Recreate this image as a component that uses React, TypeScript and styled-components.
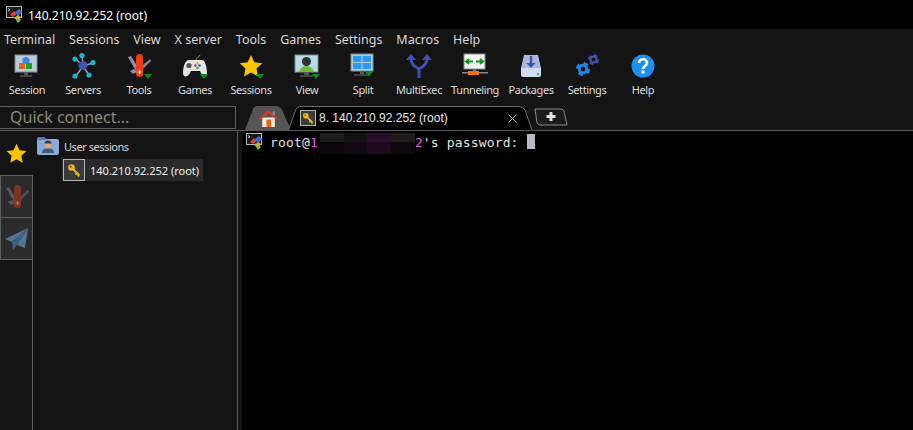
import React from "react";
import styled, { createGlobalStyle } from "styled-components";

const GlobalStyle = createGlobalStyle`
  html, body {
    margin: 0;
    padding: 0;
    background: #141414;
    overflow: hidden;
  }
`;

const Window = styled.div`
  width: 913px;
  height: 430px;
  display: flex;
  flex-direction: column;
  background: #141414;
  color: #e0e0e0;
  font-family: "Noto Sans", "Open Sans", sans-serif;
  overflow: hidden;
`;

const TitleBar = styled.div`
  height: 29px;
  flex: none;
  display: flex;
  align-items: center;
  gap: 4px;
  padding: 1px 0 0 6px;
  box-sizing: border-box;
  background: #000;
  color: #fff;
  font-size: 12px;
`;

const MenuBar = styled.div`
  height: 21px;
  flex: none;
  display: flex;
  align-items: center;
  gap: 13.9px;
  padding-left: 4px;
  font-size: 12.5px;
  color: #d8d8d8;
`;

const Toolbar = styled.div`
  height: 56px;
  flex: none;
  display: flex;
`;

const ToolButton = styled.div`
  width: 56px;
  flex: none;
  display: flex;
  flex-direction: column;
  align-items: center;
  gap: 3px;
  padding-top: 3px;
  font-size: 11px;
  letter-spacing: -0.4px;
  color: #dcdcdc;
  white-space: nowrap;
  svg {
    flex: none;
  }
  &:first-child {
    margin-left: -1px;
  }
`;

const ConnectRow = styled.div`
  height: 24px;
  flex: none;
  display: flex;
`;

const QuickConnect = styled.div`
  width: 236px;
  height: 23px;
  box-sizing: border-box;
  flex: none;
  border: 1px solid #5f5f5f;
  border-left: none;
  padding-left: 10px;
  font-size: 16px;
  line-height: 20px;
  color: #8a8a80;
`;

const TabStrip = styled.div`
  flex: 1;
  display: flex;
  align-items: flex-end;
  padding-left: 9px;
`;

const TabShape = styled.svg`
  position: absolute;
  inset: 0;
`;

const TabLayer = styled.span`
  position: relative;
  display: flex;
  align-items: center;
`;

const HomeTab = styled.div`
  position: relative;
  width: 46px;
  height: 24px;
  flex: none;
  display: flex;
  align-items: center;
  justify-content: center;
`;

const ActiveTab = styled.div`
  position: relative;
  width: 244px;
  height: 24px;
  flex: none;
  display: flex;
  align-items: center;
  gap: 3px;
  padding-left: 12px;
  box-sizing: border-box;
  margin-left: -3px;
  color: #e8e8e8;
  font-family: "Liberation Sans", Arial, sans-serif;
  font-size: 12px;
  white-space: nowrap;
`;

const TabClose = styled.svg`
  position: relative;
  margin-left: auto;
  margin-right: 15px;
`;

const AddTab = styled.div`
  position: relative;
  width: 34px;
  height: 18px;
  flex: none;
  margin: 0 0 4px 2px;
`;

const Main = styled.div`
  flex: 1;
  display: flex;
  min-height: 0;
  border-top: 1px solid #5a5a5a;
`;

const Sidebar = styled.div`
  width: 237px;
  flex: none;
  display: flex;
  border-right: 1px solid #5f5f5f;
`;

const SideRail = styled.div`
  width: 33px;
  flex: none;
  display: flex;
  flex-direction: column;
`;

const RailStar = styled.div`
  height: 44px;
  flex: none;
  display: flex;
  align-items: center;
  justify-content: center;
`;

const RailStack = styled.div`
  flex: 1;
  display: flex;
  flex-direction: column;
  border-right: 1px solid #5f5f5f;
`;

const RailTab = styled.div`
  height: 41px;
  flex: none;
  display: flex;
  align-items: center;
  justify-content: center;
  background: #2c2c2c;
  border-top: 1px solid #5f5f5f;
  border-left: 1px solid #5f5f5f;
  &:last-child {
    border-bottom: 1px solid #5f5f5f;
  }
`;

const Tree = styled.div`
  flex: 1;
  padding: 5px 0 0 4px;
  display: flex;
  flex-direction: column;
  gap: 3px;
`;

const TreeFolder = styled.div`
  display: flex;
  align-items: center;
  gap: 5px;
  height: 20px;
  font-size: 11px;
  letter-spacing: -0.45px;
  color: #d8d8d8;
`;

const TreeSession = styled.div`
  width: 141px;
  height: 22px;
  margin-left: 25px;
  display: flex;
  align-items: center;
  gap: 5px;
  padding-left: 1px;
  box-sizing: border-box;
  background: #2a2a2a;
  font-size: 11px;
  color: #f0f0f0;
  white-space: nowrap;
`;

const KeyBox = styled.span<{ $size: number }>`
  position: relative;
  width: ${(p) => p.$size}px;
  height: ${(p) => p.$size}px;
  flex: none;
  display: flex;
  align-items: center;
  justify-content: center;
  box-sizing: border-box;
  border: 1px solid #b5b5b5;
  background: #3a3a3a;
`;

const Terminal = styled.div`
  flex: 1;
  margin-left: 4px;
  background: #000;
  padding: 1px 0 0 4px;
  display: flex;
  align-items: flex-start;
  gap: 6px;
  font-family: "DejaVu Sans Mono", "Liberation Mono", monospace;
  font-size: 13px;
  line-height: 21px;
  color: #e4e4e4;
  letter-spacing: 0.15px;
  white-space: pre;
`;

const PromptLine = styled.div`
  display: flex;
  align-items: flex-start;
`;

const Pink = styled.span`
  color: #e858e8;
`;

const Redacted = styled.span`
  width: 95px;
  height: 21px;
  margin: 1px 0 0 2px;
  display: grid;
  grid-template-columns: repeat(4, 1fr);
  grid-template-rows: 9px 12px;
`;

const RedactCell = styled.span<{ $color: string }>`
  background: ${(p) => p.$color};
`;

const Cursor = styled.span`
  width: 8px;
  height: 15px;
  margin-top: 2px;
  background: #b8b8c4;
`;

const TermIconWrap = styled.span`
  margin-top: 1px;
  display: flex;
`;

const AppIcon = ({ size = 18 }: { size?: number }) => (
  <svg width={size} height={size} viewBox="0 0 18 18">
    <rect x="0.500" y="0.500" width="15" height="11" fill="#1a1a1a" stroke="#b8b8b8" />
    <path d="M2 2.500l2 1.200-2 1.200" stroke="#ddd" fill="none" strokeWidth="0.800" />
    <path d="M4 9l4-4 3 3-4 3z" fill="#e03a3a" />
    <path d="M9 6l4-3 3 3-4 4z" fill="#3a6fd8" />
    <path d="M8 12l4-3 3 2-3 4z" fill="#d8a83a" />
    <path d="M10 14l3-2 2 2-3 3z" fill="#6fc83a" />
  </svg>
);

const Badge = () => <path d="M18 21h8l-4 5z" fill="#0e8a1e" />;

const SessionIcon = () => (
  <svg width="26" height="26" viewBox="0 0 26 26">
    <rect x="1" y="2" width="22" height="17" fill="#b4cbd8" stroke="#7c8f9a" />
    <rect x="10" y="19" width="4" height="3" fill="#555" />
    <rect x="6" y="22" width="12" height="2" fill="#444" />
    <circle cx="12" cy="7.500" r="3.600" fill="#3f7fe0" />
    <rect x="5" y="10" width="6" height="6" fill="#e0602a" />
    <rect x="12" y="10" width="6" height="6" fill="#1ea32a" />
  </svg>
);

const ServersIcon = () => (
  <svg width="26" height="26" viewBox="0 0 26 26">
    <g stroke="#9aa6b0" strokeWidth="1.400">
      <path d="M13 13L6 6M13 13L12 2M13 13L23 10M13 13L6 23M13 13L19 22" />
    </g>
    <circle cx="13" cy="12.500" r="4.500" fill="#3e52b4" />
    <g fill="#19b5cf">
      <circle cx="5" cy="6" r="2.600" />
      <circle cx="12" cy="2.600" r="2.600" />
      <circle cx="23" cy="9.500" r="2.600" />
      <circle cx="5" cy="23" r="2.600" />
      <circle cx="19" cy="22" r="2.600" />
    </g>
  </svg>
);

const ToolsIcon = ({ dim }: { dim?: boolean }) => (
  <svg width="26" height="26" viewBox="0 0 26 26" opacity={dim ? 0.42 : 1}>
    <path d="M2 4l3-1 8 13-3 2z" fill="#8f8fb0" />
    <path d="M24 6l1 2-11 11-2-3z" fill="#7d7d98" />
    <path d="M4 18l4-2 3 3-4 2z" fill="#8f8fb0" />
    <rect x="10" y="1" width="7" height="23" rx="3.500" fill="#f23c10" />
    <path d="M13.500 17v4M11.500 19h4" stroke="#fff" strokeWidth="1.200" />
    {!dim && <Badge />}
  </svg>
);

const GamesIcon = () => (
  <svg width="26" height="26" viewBox="0 0 26 26">
    <path d="M14 7c0-3 3-2 4-5" stroke="#888" fill="none" />
    <path d="M7 7h13c3 0 5 7 5 13 0 5-4 4-6 0l-1-2H9l-1 2c-2 4-7 5-7 0C1 14 3 7 7 7z" fill="#e4e4e4" />
    <circle cx="7" cy="12.500" r="2.600" fill="#555" />
    <circle cx="15.500" cy="10" r="1.200" fill="#f2b01e" />
    <circle cx="13.500" cy="12.500" r="1.300" fill="#e02a2a" />
    <circle cx="17.500" cy="12.500" r="1.300" fill="#2a5fe0" />
    <circle cx="15.500" cy="15" r="1.200" fill="#1ea32a" />
    <Badge />
  </svg>
);

const StarIcon = ({ size = 26, badge }: { size?: number; badge?: boolean }) => (
  <svg width={size} height={size} viewBox="0 0 26 26">
    <path d="M13 2l3.400 7.200 7.900 1-5.800 5.400 1.500 7.800-7-3.800-7 3.800 1.500-7.800L1.700 10.200l7.900-1z" fill="#f6c400" />
    {badge && <Badge />}
  </svg>
);

const ViewIcon = () => (
  <svg width="26" height="26" viewBox="0 0 26 26">
    <rect x="1" y="2" width="23" height="17" fill="#b4dbe8" stroke="#7c8f9a" />
    <rect x="10" y="19" width="5" height="3" fill="#555" />
    <rect x="6" y="22" width="13" height="2" fill="#444" />
    <circle cx="12.500" cy="8.500" r="4.500" fill="#2e2e2e" />
    <path d="M5 19c1-5 5-6 7.500-6s6 1 7.500 6z" fill="#76b83a" />
    <Badge />
  </svg>
);

const SplitIcon = () => (
  <svg width="26" height="26" viewBox="0 0 26 26">
    <rect x="1" y="1" width="22" height="17" fill="#b4cbd8" stroke="#7c8f9a" />
    <rect x="3" y="3" width="8.500" height="6" fill="#2a9bf0" />
    <rect x="12.500" y="3" width="8.500" height="6" fill="#2a9bf0" />
    <rect x="3" y="10" width="8.500" height="6" fill="#2a9bf0" />
    <rect x="12.500" y="10" width="8.500" height="6" fill="#2a9bf0" />
    <rect x="10" y="18" width="4" height="3" fill="#555" />
    <rect x="4" y="21" width="16" height="2" fill="#444" />
    <path d="M15 19h8l-4 4z" fill="#0e8a1e" />
  </svg>
);

const MultiExecIcon = () => (
  <svg width="26" height="26" viewBox="0 0 26 26">
    <path d="M13 25V17M13 17C13 14 5 14 5 6M13 17C13 14 21 14 21 6" stroke="#3d50ad" strokeWidth="3" fill="none" />
    <path d="M5 1l5 6H0zM21 1l5 6H16z" fill="#3d50ad" />
  </svg>
);

const TunnelingIcon = () => (
  <svg width="28" height="26" viewBox="0 0 28 26">
    <rect x="3" y="1" width="21" height="15" fill="#f4f4f4" stroke="#8a8a8a" />
    <path d="M12 8.500H5M8 6L5 8.500 8 11M15 8.500h7M19 6l3 2.500-3 2.500" stroke="#0e9a1e" strokeWidth="2" fill="none" />
    <rect x="12" y="16" width="3" height="3" fill="#777" />
    <rect x="1" y="19" width="26" height="1.500" fill="#888" />
    <rect x="7" y="18" width="11" height="4" fill="#f0701e" />
  </svg>
);

const PackagesIcon = () => (
  <svg width="26" height="26" viewBox="0 0 26 26">
    <path d="M6 2h14l3 13H3z" fill="#a9b6e0" />
    <path d="M3 15h20v7c0 1-1 2-2 2H5c-1 0-2-1-2-2z" fill="#d0dcf2" />
    <path d="M13 3v10" stroke="#3d50ad" strokeWidth="2.200" />
    <path d="M8.500 10l4.500 5 4.500-5z" fill="#3d50ad" />
    <rect x="19" y="20" width="2" height="2" fill="#2ebd3a" />
  </svg>
);

const Gear = ({ cx, cy, r, color }: { cx: number; cy: number; r: number; color: string }) => (
  <g>
    <circle cx={cx} cy={cy} r={r * 0.74} fill={color} />
    <circle
      cx={cx}
      cy={cy}
      r={r * 0.84}
      fill="none"
      stroke={color}
      strokeWidth={r * 0.34}
      strokeDasharray={`${r * 0.66} ${r * 0.66}`}
    />
    <circle cx={cx} cy={cy} r={r * 0.34} fill="#141414" />
  </g>
);

const SettingsIcon = () => (
  <svg width="26" height="26" viewBox="0 0 26 26">
    <Gear cx={9} cy={16} r={7} color="#1e88e8" />
    <Gear cx={19.500} cy={6.500} r={5.500} color="#3d50ad" />
  </svg>
);

const HelpIcon = () => (
  <svg width="26" height="26" viewBox="0 0 26 26">
    <circle cx="13" cy="13" r="11.500" fill="#1e90f0" />
    <path d="M9 10c0-5 8-5 8 0 0 3-4 3-4 6" stroke="#fff" strokeWidth="2.600" fill="none" />
    <rect x="11.500" y="17.500" width="3" height="3" fill="#fff" />
  </svg>
);

const KeyIcon = ({ size = 14 }: { size?: number }) => (
  <svg width={size} height={size} viewBox="0 0 14 14">
    <circle cx="4.500" cy="4.500" r="3.300" fill="#f0b61e" />
    <circle cx="3.700" cy="3.700" r="0.900" fill="#3a3a3a" />
    <path d="M6 6l6.500 6.500M10 10l-1.500 1.500M12 12l-1.200 1.200" stroke="#f0b61e" strokeWidth="2" />
  </svg>
);

const HomeIcon = () => (
  <svg width="19" height="18" viewBox="0 0 18 17">
    <path d="M3 8h12v9H3z" fill="#f2ece0" />
    <path d="M9 1L0.500 9l1.300 1L9 4l7.200 6 1.300-1z" fill="#d83a2a" />
    <rect x="13" y="2" width="2" height="4" fill="#7c8fb0" />
    <rect x="7" y="10" width="4.500" height="7" fill="#e8601e" />
  </svg>
);

const FolderIcon = () => (
  <svg width="22" height="18" viewBox="0 0 22 18">
    <path d="M0 2c0-1 1-2 2-2h5l2 2h11c1 0 2 1 2 2v12c0 1-1 2-2 2H2c-1 0-2-1-2-2z" fill="#8aaad8" />
    <path d="M0 1.500C0 .5 1 0 2 0h5l2 3H0z" fill="#4a7ac8" />
    <circle cx="11" cy="7.500" r="3.300" fill="#e8a878" />
    <path d="M7.500 6.500c0-4 7-4 7 0z" fill="#3a3a3a" />
    <path d="M5 16c0-4 3-4.500 6-4.500s6 .5 6 4.500z" fill="#4a5a6a" />
  </svg>
);

const PlaneIcon = () => (
  <svg width="24" height="24" viewBox="0 0 24 24" opacity={0.62}>
    <path d="M23 1L0 12l7 3z" fill="#6fa0d8" />
    <path d="M23 1L7 15l1 8 4-5z" fill="#4a80c0" />
    <path d="M23 1L12 18l8 3z" fill="#6fa0d8" />
  </svg>
);

const tools = [
  { label: "Session", icon: <SessionIcon /> },
  { label: "Servers", icon: <ServersIcon /> },
  { label: "Tools", icon: <ToolsIcon /> },
  { label: "Games", icon: <GamesIcon /> },
  { label: "Sessions", icon: <StarIcon badge /> },
  { label: "View", icon: <ViewIcon /> },
  { label: "Split", icon: <SplitIcon /> },
  { label: "MultiExec", icon: <MultiExecIcon /> },
  { label: "Tunneling", icon: <TunnelingIcon /> },
  { label: "Packages", icon: <PackagesIcon /> },
  { label: "Settings", icon: <SettingsIcon /> },
  { label: "Help", icon: <HelpIcon /> },
];

const menus = ["Terminal", "Sessions", "View", "X server", "Tools", "Games", "Settings", "Macros", "Help"];

const blur = ["#1c1c1c", "#121212", "#2a0f2a", "#1f1b19", "#0a050a", "#150815", "#1e0a1e", "#100810"];

export default function App() {
  return (
    <Window>
      <GlobalStyle />
      <TitleBar>
        <AppIcon />
        140.210.92.252 (root)
      </TitleBar>
      <MenuBar>
        {menus.map((m) => (
          <span key={m}>{m}</span>
        ))}
      </MenuBar>
      <Toolbar>
        {tools.map((t) => (
          <ToolButton key={t.label}>
            {t.icon}
            {t.label}
          </ToolButton>
        ))}
      </Toolbar>
      <ConnectRow>
        <QuickConnect>Quick connect...</QuickConnect>
        <TabStrip>
          <HomeTab>
            <TabShape width="46" height="24" viewBox="0 0 46 24">
              <path d="M0 24L8 3Q9 0 13 0H30Q35 0 37 4L46 24z" fill="#555" />
            </TabShape>
            <TabLayer>
              <HomeIcon />
            </TabLayer>
          </HomeTab>
          <ActiveTab>
            <TabShape width="244" height="24" viewBox="0 0 244 24">
              <path d="M0.500 24L8 3Q9 .5 13 .5H231Q235 .5 237 4L244 24" fill="#000" stroke="#6a6a6a" />
            </TabShape>
            <KeyBox $size={16}>
              <KeyIcon size={12} />
            </KeyBox>
            <TabLayer>8. 140.210.92.252 (root)</TabLayer>
            <TabClose width="9" height="9" viewBox="0 0 9 9">
              <path d="M0.500 0.500l8 8M8.500 0.500l-8 8" stroke="#bdbdbd" strokeWidth="1" />
            </TabClose>
          </ActiveTab>
          <AddTab>
            <TabShape width="34" height="18" viewBox="0 0 34 18">
              <path d="M1 1h26q2 0 3 2l3 14H6q-2 0-3-2z" fill="#1c1c1c" stroke="#8a8a8a" />
              <path d="M17 4v9M12.500 8.500h9" stroke="#e0e0e0" strokeWidth="3" />
            </TabShape>
          </AddTab>
        </TabStrip>
      </ConnectRow>
      <Main>
        <Sidebar>
          <SideRail>
            <RailStar>
              <StarIcon size={23} />
            </RailStar>
            <RailStack>
              <RailTab>
                <ToolsIcon dim />
              </RailTab>
              <RailTab>
                <PlaneIcon />
              </RailTab>
            </RailStack>
          </SideRail>
          <Tree>
            <TreeFolder>
              <FolderIcon />
              User sessions
            </TreeFolder>
            <TreeSession>
              <KeyBox $size={22}>
                <KeyIcon size={14} />
              </KeyBox>
              140.210.92.252 (root)
            </TreeSession>
          </Tree>
        </Sidebar>
        <Terminal>
          <TermIconWrap>
            <AppIcon />
          </TermIconWrap>
          <PromptLine>
            root@<Pink>1</Pink>
            <Redacted>
              {blur.map((c, i) => (
                <RedactCell key={i} $color={c} />
              ))}
            </Redacted>
            <Pink>2</Pink>'s password: <Cursor />
          </PromptLine>
        </Terminal>
      </Main>
    </Window>
  );
}
